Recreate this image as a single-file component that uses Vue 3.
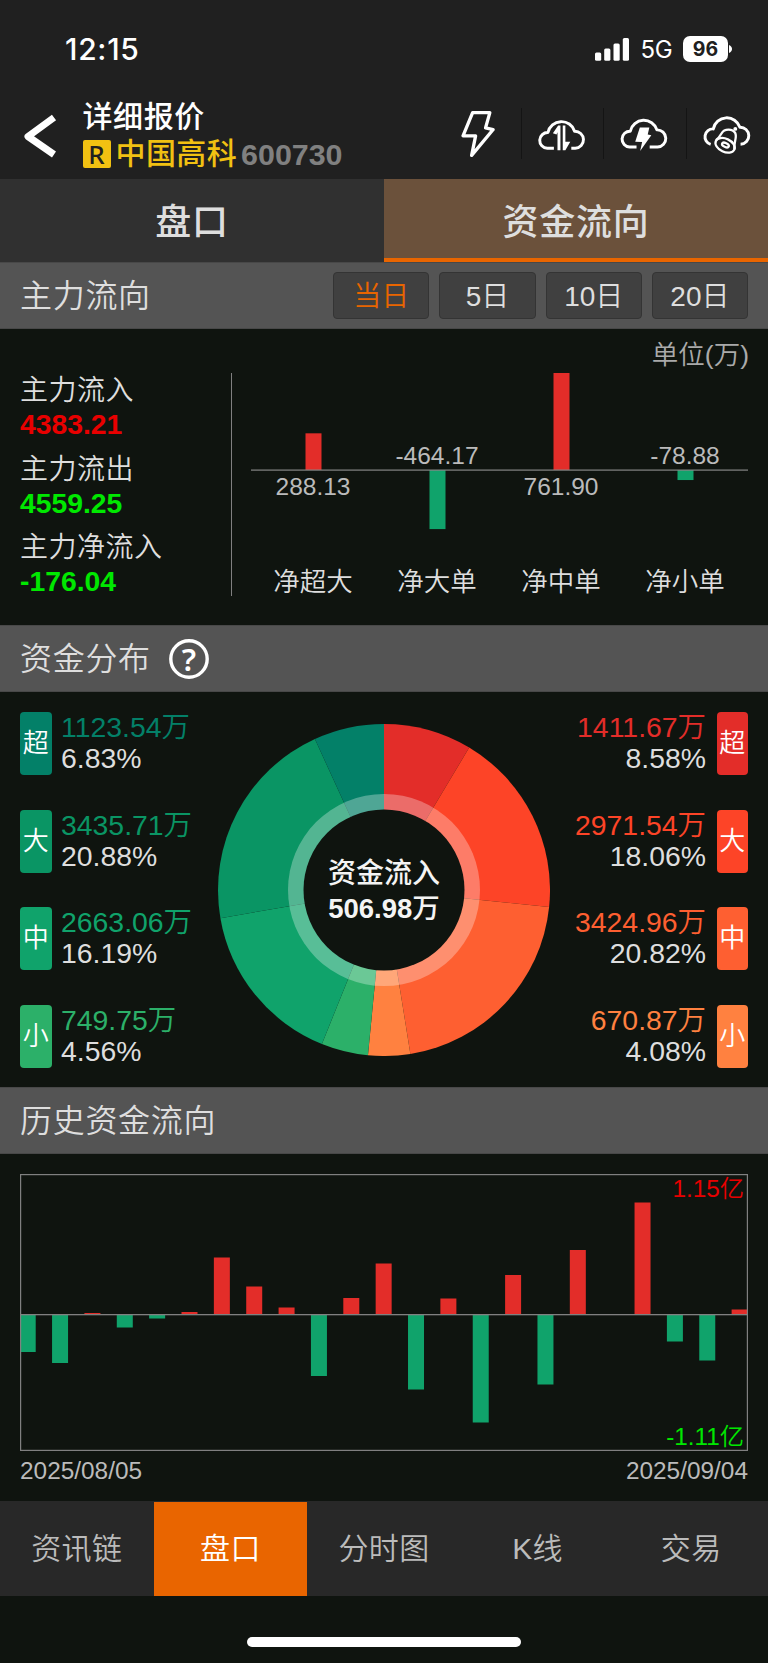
<script setup>
import { ref } from 'vue';

const topTabs = ['盘口', '资金流向'];
const activeTab = ref('资金流向');

const periods = ['当日', '5日', '10日', '20日'];
const period = ref('当日');

const navItems = ['资讯链', '盘口', '分时图', 'K线', '交易'];
const activeNav = ref('盘口');

const summary = [
	{ label: '主力流入', value: '4383.21', tone: 'red' },
	{ label: '主力流出', value: '4559.25', tone: 'green' },
	{ label: '主力净流入', value: '-176.04', tone: 'green' },
];

const netOrders = [
	{ label: '净超大', value: '288.13' },
	{ label: '净大单', value: '-464.17' },
	{ label: '净中单', value: '761.90' },
	{ label: '净小单', value: '-78.88' },
].map((item, i) => {
	const amount = Number(item.value);
	return { ...item, up: amount > 0, x: 62.5 + i * 124, h: (Math.abs(amount) / 761.9) * 97 };
});

const outflow = [
	{ name: '超', amount: '1123.54万', pct: 6.83, color: '#038068' },
	{ name: '大', amount: '3435.71万', pct: 20.88, color: '#0a9564' },
	{ name: '中', amount: '2663.06万', pct: 16.19, color: '#10a36b' },
	{ name: '小', amount: '749.75万', pct: 4.56, color: '#2cb069' },
];

const inflow = [
	{ name: '超', amount: '1411.67万', pct: 8.58, color: '#e32d29' },
	{ name: '大', amount: '2971.54万', pct: 18.06, color: '#fd4427' },
	{ name: '中', amount: '3424.96万', pct: 20.82, color: '#fe5f31' },
	{ name: '小', amount: '670.87万', pct: 4.08, color: '#ff8140' },
];

// the ring starts at 12 o'clock and runs clockwise: inflow first, then outflow
let angle = 0;
const slices = [...inflow, ...[...outflow].reverse()].map((item) => {
	const point = (a) => `${166 + 166 * Math.sin(a)} ${166 - 166 * Math.cos(a)}`;
	const start = point(angle);
	angle += (item.pct / 100) * Math.PI * 2;
	return { color: item.color, d: `M166 166 L${start} A166 166 0 0 1 ${point(angle)} Z` };
});

const history = [
	-37.5, -48.5, 1.5, -13, -4, 2.5, 57, 28, 7, -61.5, 16.5, 51, -75, 16, -108, 39.5, -70, 64.5, 0, 112, -27, -46, 5,
].map((v, i) => ({ v, x: i * 32.36 - 0.3 }));
</script>

<template>
	<div class="page">
		<header>
			<div class="status">
				<span class="time">12:15</span>
				<svg class="signal" width="35" height="23" viewBox="0 0 35 23" fill="#fff">
					<rect x="0" y="14.5" width="6.2" height="8.3" rx="1.5" />
					<rect x="9.2" y="10.5" width="6.2" height="12.3" rx="1.5" />
					<rect x="18.5" y="5.5" width="6.2" height="17.3" rx="1.5" />
					<rect x="27.8" y="0" width="6.2" height="22.8" rx="1.5" />
				</svg>
				<span class="network">5G</span>
				<span class="battery">96</span>
				<svg class="nub" width="3" height="8" viewBox="0 0 3 8"><path d="M0 0C4 1.5 4 6.5 0 8Z" fill="#fff" /></svg>
			</div>
			<div class="titleBar">
				<svg class="back" width="34" height="44" viewBox="0 0 34 44" fill="none" stroke="#fff" stroke-width="7">
					<path d="M31 3.5L5 22.5L31 40.5" stroke-linejoin="round" />
				</svg>
				<div class="stock">
					<h1>详细报价</h1>
					<div class="name"><i>R</i><b>中国高科</b><span>600730</span></div>
				</div>
				<div class="actions">
					<svg viewBox="0 0 248 154" class="icon">
						<path class="bolt" d="M104 14H156L143 60L166 65L101 143L113 84H75Z" />
					</svg>
					<svg viewBox="0 0 248 154" class="icon">
						<path d="M97 122H77A24 24 0 0 1 79 74A42 42 0 0 1 160 70A26 26 0 0 1 162 122H150" />
						<path class="solid" d="M94 76L110 53H117V128H108V73L105 80ZM124 53H132V102H147L132 128H124Z" />
					</svg>
					<svg viewBox="0 0 248 154" class="icon">
						<path d="M99 118H78A24 24 0 0 1 80 70A42 42 0 0 1 161 66A26 26 0 0 1 163 118H139" />
						<path class="solid" d="M109 59H138L133 80L144 82L110 130L116 103L95 102Z" />
					</svg>
					<svg viewBox="0 0 248 154" class="icon">
						<path d="M72 110A24 24 0 0 1 80 63A42 42 0 0 1 161 58A26 26 0 0 1 163 110" />
						<path class="bell" d="M88 97C96 91 101 84 105 77C114 61 139 62 147 76C153 89 142 103 144 126" />
						<ellipse class="bell" cx="116" cy="113" rx="31" ry="20" transform="rotate(25 116 113)" />
						<ellipse class="bell" cx="117" cy="112" rx="11" ry="6" transform="rotate(25 117 112)" />
						<circle class="solid" cx="147" cy="63" r="6" />
					</svg>
				</div>
			</div>
		</header>

		<div class="tabs">
			<button v-for="tab in topTabs" :key="tab" :class="{ active: tab === activeTab }" @click="activeTab = tab">{{ tab }}</button>
		</div>

		<div class="sectionTitle">
			<h2>主力流向</h2>
			<div class="periods">
				<button v-for="p in periods" :key="p" :class="{ active: p === period }" @click="period = p">{{ p }}</button>
			</div>
		</div>

		<section class="mainFlow">
			<div class="summary">
				<div v-for="item in summary" :key="item.label">
					<p>{{ item.label }}</p>
					<strong :class="item.tone">{{ item.value }}</strong>
				</div>
			</div>
			<svg class="netChart" width="497" height="296" viewBox="0 0 497 296">
				<text class="unit" x="498" y="35">单位(万)</text>
				<g v-for="item in netOrders" :key="item.label">
					<rect
						:x="item.x - 8"
						:y="item.up ? 141 - item.h : 141"
						width="16"
						:height="item.h"
						:fill="item.up ? '#e32d29' : '#10a36b'" />
					<text class="num" :x="item.x - 0.5" :y="item.up ? 165.5 : 134.5">{{ item.value }}</text>
					<text class="label" :x="item.x - 0.5" y="262">{{ item.label }}</text>
				</g>
				<rect x="0" y="140.5" width="497" height="1.2" fill="#858585" />
			</svg>
		</section>

		<div class="sectionTitle">
			<h2>资金分布</h2>
			<svg class="help" width="40" height="40" viewBox="0 0 40 40">
				<circle cx="20" cy="20" r="18.2" fill="none" stroke="#fff" stroke-width="3.4" />
				<text x="20" y="31.5" text-anchor="middle">?</text>
			</svg>
		</div>

		<section class="distribution">
			<div class="legend">
				<div v-for="item in outflow" :key="item.name" class="entry">
					<span class="badge" :style="{ background: item.color }">{{ item.name }}</span>
					<p>
						<span :style="{ color: item.color }">{{ item.amount }}</span>
						<span>{{ item.pct.toFixed(2) }}%</span>
					</p>
				</div>
			</div>
			<svg class="donut" width="332" height="332" viewBox="0 0 332 332">
				<path v-for="slice in slices" :key="slice.color" :d="slice.d" :fill="slice.color" />
				<circle cx="166" cy="166" r="96" fill="#fff" fill-opacity="0.3" />
				<circle cx="166" cy="166" r="80.5" fill="#0f140f" />
				<text x="166" y="159">资金流入</text>
				<text x="166" y="193.5" class="total">506.98<tspan>万</tspan></text>
			</svg>
			<div class="legend right">
				<div v-for="item in inflow" :key="item.name" class="entry">
					<span class="badge" :style="{ background: item.color }">{{ item.name }}</span>
					<p>
						<span :style="{ color: item.color }">{{ item.amount }}</span>
						<span>{{ item.pct.toFixed(2) }}%</span>
					</p>
				</div>
			</div>
		</section>

		<div class="sectionTitle">
			<h2>历史资金流向</h2>
		</div>

		<section class="history">
			<svg width="728" height="277" viewBox="0 0 728 277">
				<rect
					v-for="bar in history"
					:key="bar.x"
					:x="bar.x"
					:y="bar.v > 0 ? 140.5 - bar.v : 140.5"
					width="16"
					:height="Math.abs(bar.v)"
					:fill="bar.v > 0 ? '#e32d29' : '#10a36b'" />
				<rect x="0" y="140" width="728" height="1.3" fill="#808080" />
				<rect x="0.6" y="0.6" width="726.8" height="275.8" fill="none" stroke="#808080" stroke-width="1.2" />
				<text x="724" y="22.5" fill="#e80000">1.15亿</text>
				<text x="724" y="271" fill="#00e800">-1.11亿</text>
			</svg>
			<div class="dates"><span>2025/08/05</span><span>2025/09/04</span></div>
		</section>

		<nav>
			<button v-for="item in navItems" :key="item" :class="{ active: item === activeNav }" @click="activeNav = item">{{ item }}</button>
		</nav>
		<div class="home"><span></span></div>
	</div>
</template>

<style>
body {
	margin: 0;
	background: #0f140f;
}
</style>

<style scoped>
* {
	box-sizing: border-box;
}

.page {
	width: 768px;
	height: 1663px;
	overflow: hidden;
	background: #0f140f;
	color: #dedede;
	font-family: 'Liberation Sans', 'Noto Sans CJK SC', sans-serif;
	font-weight: 350;
}

h1,
h2,
p {
	margin: 0;
}

button {
	padding: 0;
	border: 0;
	font: inherit;
	color: inherit;
	background: none;
}

header {
	height: 179px;
	background: #202020;
	color: #fff;
}

.status {
	height: 98px;
	padding: 0 36px 0 65px;
	display: flex;
	align-items: center;
	font-family: Inter, sans-serif;
}

.time {
	flex: 1;
	font-size: 30px;
	font-weight: 550;
	letter-spacing: 0.7px;
}

.network {
	width: 32px;
	margin: 1px 10.5px 0;
	font-size: 24px;
	font-weight: 400;
	letter-spacing: -0.4px;
}

.battery {
	width: 45px;
	height: 26px;
	border-radius: 7px;
	background: #fff;
	color: #202020;
	font-size: 19.5px;
	font-weight: 700;
	line-height: 26px;
	text-align: center;
}

.nub {
	margin-left: 1px;
}

.titleBar {
	height: 81px;
	display: flex;
	align-items: flex-start;
}

.back {
	margin: 16px 25.5px 0 23px;
}

.stock {
	flex: 1;
}

h1 {
	height: 38px;
	padding-top: 1px;
	font-size: 30px;
	line-height: 35px;
	font-weight: 500;
	letter-spacing: 0.6px;
}

.name {
	height: 36px;
	display: flex;
	align-items: center;
	font-size: 30px;
	line-height: 36px;
}

.name i {
	width: 28px;
	height: 28px;
	margin-right: 5px;
	border-radius: 2px;
	background: #f1c112;
	color: #202020;
	font: 500 26px/28px 'Noto Sans', sans-serif;
	text-align: center;
}

.name b {
	color: #f1c112;
	font-weight: 500;
	letter-spacing: 0.4px;
}

.name span {
	margin-left: 4px;
	color: #808080;
	font-size: 30.4px;
	font-weight: 700;
}

.actions {
	width: 330px;
	margin-top: 10px;
	display: flex;
}

.icon {
	width: 82.5px;
	height: 51px;
	fill: none;
	stroke: #fff;
	stroke-width: 9;
	stroke-linejoin: round;
}

.icon + .icon {
	border-left: 1.5px solid #141414;
}

.icon .bolt {
	stroke-width: 10;
}

.icon .solid {
	fill: #fff;
	stroke: none;
}

.icon .bell {
	stroke-width: 7;
}

.tabs {
	height: 83px;
	display: flex;
}

.tabs button {
	width: 50%;
	background: #303030;
	border-bottom: 4px solid #303030;
	font-size: 36px;
	font-weight: 500;
	letter-spacing: 0.8px;
}

.tabs .active {
	background: #6b513b;
	border-color: #e96500;
}

.sectionTitle {
	height: 67px;
	padding: 0 20px;
	display: flex;
	align-items: center;
	background: #545454;
	border-top: 1px solid #484848;
	border-bottom: 1px solid #484848;
}

h2 {
	font-size: 32px;
	line-height: 64px;
	font-weight: 350;
	letter-spacing: 0.7px;
}

.periods {
	margin-left: auto;
	display: flex;
	gap: 10px;
}

.periods button {
	width: 96.2px;
	height: 47px;
	padding-bottom: 3px;
	border: 1.5px solid #343434;
	border-radius: 4px;
	background: #404040;
	font-size: 28px;
}

.periods .active {
	color: #e96500;
}

.help {
	margin-left: 18px;
}

.help text {
	fill: #fff;
	font: 600 31px 'Noto Sans', sans-serif;
}

.mainFlow {
	height: 296px;
	padding: 0 20px;
	display: flex;
}

.summary {
	width: 212px;
	height: 223px;
	margin: 44px 19px 0 0;
	border-right: 1.5px solid #808080;
}

.summary div {
	height: 78.5px;
}

.summary p {
	height: 36px;
	font-size: 28px;
	line-height: 35px;
	letter-spacing: 0.5px;
}

.summary strong {
	display: block;
	font-size: 28.3px;
	line-height: 30px;
	font-weight: 700;
}

.red {
	color: #e80000;
}

.green {
	color: #00e800;
}

.netChart {
	overflow: visible;
}

.netChart text {
	text-anchor: middle;
	font-size: 26.5px;
	fill: #dedede;
}

.netChart .unit {
	text-anchor: end;
	fill: #aaa;
}

.netChart .num {
	font-size: 24.5px;
	fill: #bbb;
}

.distribution {
	height: 395px;
	padding: 20px 20px 0;
	display: flex;
	justify-content: space-between;
}

.legend {
	width: 190px;
}

.entry {
	height: 97.5px;
	display: flex;
	align-items: flex-start;
	gap: 9.5px;
}

.right .entry {
	flex-direction: row-reverse;
	gap: 10.5px;
	text-align: right;
}

.badge {
	width: 31.5px;
	height: 63px;
	border-radius: 4px;
	color: #fff;
	font-size: 26px;
	line-height: 62px;
	text-align: center;
}

.entry p {
	font-size: 28.4px;
	line-height: 31px;
}

.entry p span {
	display: block;
	height: 31px;
}

.donut {
	margin-top: 11.5px;
}

.donut text {
	fill: #f4f4f4;
	font-size: 28px;
	font-weight: 500;
	text-anchor: middle;
}

.donut .total {
	font-size: 27.5px;
	font-weight: 700;
}

.donut tspan {
	font-weight: 500;
}

.history {
	height: 346.5px;
	padding: 20px 20px 0;
}

.history svg {
	display: block;
}

.history text {
	font-size: 24.3px;
	text-anchor: end;
}

.dates {
	display: flex;
	justify-content: space-between;
	color: #bbb;
	font-size: 24.4px;
	line-height: 39px;
}

nav {
	height: 95px;
	padding-top: 1.5px;
	display: flex;
	background: #282828;
}

nav button {
	width: 20%;
	padding-bottom: 6px;
	color: #bbb;
	font-size: 30px;
	letter-spacing: 0.4px;
}

nav .active {
	background: #e96500;
	color: #fff;
}

.home {
	height: 67px;
	padding-top: 41px;
}

.home span {
	display: block;
	width: 274px;
	height: 10px;
	margin: 0 auto;
	border-radius: 5px;
	background: #fff;
}
</style>
